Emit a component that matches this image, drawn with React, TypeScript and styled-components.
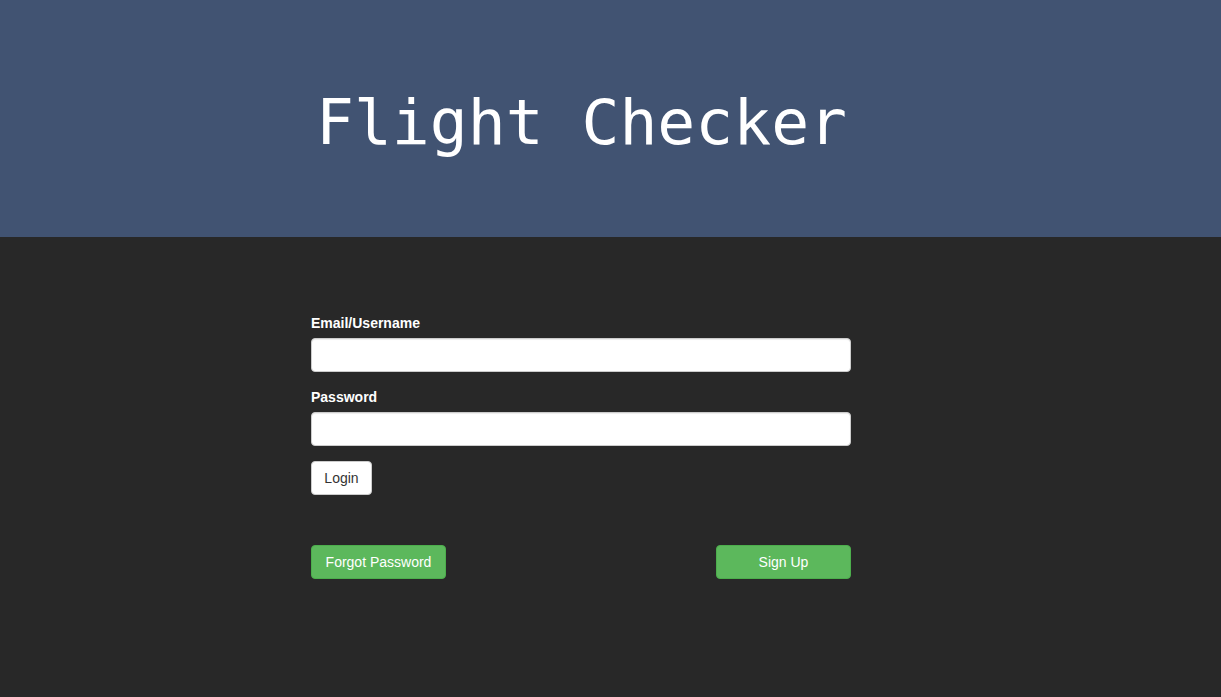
import React, { useState } from "react";
import styled, { createGlobalStyle } from "styled-components";

const GlobalStyle = createGlobalStyle`
  * {
    box-sizing: border-box;
  }
  html, body {
    margin: 0;
    padding: 0;
    background: #282828;
    font-family: "Liberation Sans", Arial, sans-serif;
    font-size: 14px;
  }
`;

const App: React.FC = () => {
  const [email, setEmail] = useState("");
  const [password, setPassword] = useState("");

  return (
    <Page>
      <GlobalStyle />
      <Header>
        <Inner>
          <Title>Flight Checker</Title>
        </Inner>
      </Header>
      <Main>
        <Inner>
          <FormGroup>
            <Label htmlFor="email">Email/Username</Label>
            <Input
              id="email"
              value={email}
              onChange={(e) => setEmail(e.target.value)}
            />
          </FormGroup>
          <FormGroup>
            <Label htmlFor="password">Password</Label>
            <Input
              id="password"
              type="password"
              value={password}
              onChange={(e) => setPassword(e.target.value)}
            />
          </FormGroup>
          <Button type="button">Login</Button>
          <Actions>
            <Button type="button" variant="success">
              Forgot Password
            </Button>
            <Button type="button" variant="success">
              Sign Up
            </Button>
          </Actions>
        </Inner>
      </Main>
    </Page>
  );
};

const Page = styled.div`
  min-height: 100vh;
  display: flex;
  flex-direction: column;
  background: #282828;
`;

const Header = styled.header`
  height: 237px;
  background: #415372;
  display: flex;
  align-items: center;
`;

const Inner = styled.div`
  width: 540px;
  margin-left: 311px;
  display: flex;
  flex-direction: column;
  align-items: flex-start;
`;

const Title = styled.h1`
  margin: 0;
  padding: 8px 0 0 5px;
  font-family: "DejaVu Sans Mono", monospace;
  font-weight: 400;
  font-size: 63px;
  line-height: 1;
  color: #ffffff;
  white-space: nowrap;
`;

const Main = styled.main`
  flex: 1;
  padding-top: 76px;
`;

const FormGroup = styled.div`
  width: 100%;
  margin-bottom: 15px;
`;

const Label = styled.label`
  display: inline-block;
  margin-bottom: 5px;
  font-weight: 700;
  font-size: 14px;
  line-height: 20px;
  color: #ffffff;
`;

const Input = styled.input`
  display: block;
  width: 100%;
  height: 34px;
  padding: 6px 12px;
  font-family: inherit;
  font-size: 14px;
  color: #555555;
  background: #ffffff;
  border: 1px solid #cccccc;
  border-radius: 4px;
  box-shadow: inset 0 1px 1px rgba(0, 0, 0, 0.075);
  outline: none;
`;

const Button = styled.button<{ variant?: "default" | "success" }>`
  display: inline-block;
  height: 34px;
  padding: 6px 12px;
  font-family: inherit;
  font-size: 14px;
  line-height: 20px;
  border-radius: 4px;
  cursor: pointer;
  border: 1px solid
    ${({ variant }) => (variant === "success" ? "#4cae4c" : "#cccccc")};
  background: ${({ variant }) =>
    variant === "success" ? "#5cb85c" : "#ffffff"};
  color: ${({ variant }) => (variant === "success" ? "#ffffff" : "#333333")};
  min-width: ${({ variant }) => (variant === "success" ? "135px" : "61px")};
`;

const Actions = styled.div`
  width: 100%;
  display: flex;
  justify-content: space-between;
  margin-top: 50px;
`;

export default App;
